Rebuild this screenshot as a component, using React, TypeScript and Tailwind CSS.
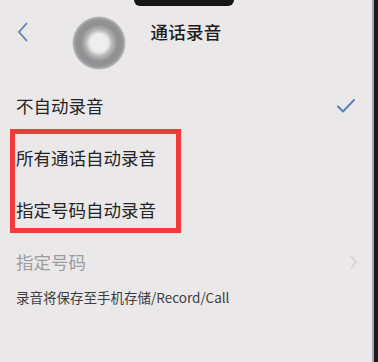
import React from 'react';

const CJK = { fontFamily: '"Noto Sans CJK SC", "Noto Sans", sans-serif' };

const BackIcon = () => (
  <svg width="12" height="20" viewBox="0 0 12 20" fill="none">
    <path d="M9.5 1.5 L2 10 L9.5 18.5" stroke="#5b7fb6" strokeWidth="1.8" strokeLinecap="round" strokeLinejoin="round" />
  </svg>
);

const CheckIcon = () => (
  <svg width="20" height="16" viewBox="0 0 20 16" fill="none">
    <path d="M2 8.5 L7 13.5 L18 2" stroke="#5a7fb8" strokeWidth="2" strokeLinecap="round" strokeLinejoin="round" />
  </svg>
);

const ChevronRight = () => (
  <svg width="8" height="14" viewBox="0 0 8 14" fill="none">
    <path d="M1.5 1.5 L6 7 L1.5 12.5" stroke="#d2d2d4" strokeWidth="1.6" strokeLinecap="round" strokeLinejoin="round" />
  </svg>
);

// touch indicator from the screen recording
const TouchDot = () => (
  <svg width="54" height="54" viewBox="0 0 54 54">
    <defs>
      <radialGradient id="td" cx="50%" cy="50%" r="50%">
        <stop offset="0%" stopColor="#f1efef" />
        <stop offset="34%" stopColor="#eeecec" />
        <stop offset="50%" stopColor="#b8b7b8" />
        <stop offset="70%" stopColor="#908f91" />
        <stop offset="88%" stopColor="#939294" />
        <stop offset="100%" stopColor="#bdbcbe" />
      </radialGradient>
    </defs>
    <circle cx="27" cy="27" r="26.5" fill="url(#td)" />
  </svg>
);

const Row: React.FC<{ label: string; muted?: boolean; right?: React.ReactNode }> = ({ label, muted, right }) => (
  <div className="h-[52px] flex items-center justify-between pl-[16px] pr-[22px]">
    <span className={`text-[17.5px] ${muted ? 'text-[#9d9c9e]' : 'text-[#262526]'}`}>{label}</span>
    {right}
  </div>
);

export default function App() {
  return (
    <div className="relative w-[378px] h-[362px] overflow-hidden bg-[#ebe8ea]" style={CJK}>
      {/* notch */}
      <div className="absolute top-0 left-[134px] w-[100px] h-[6px] rounded-b-[10px] bg-[#161616]" />

      {/* Header */}
      <div className="h-[64px] flex items-center pl-[17px] pr-[23px]">
        <div className="flex-1 flex">
          <BackIcon />
        </div>
        <h1 className="text-[17.5px] font-medium text-[#1e1d1e] tracking-[0.2px]">通话录音</h1>
        <div className="flex-1" />
      </div>

      <div className="mt-[16px] flex flex-col">
        <Row label="不自动录音" right={<CheckIcon />} />
        <Row label="所有通话自动录音" />
        <Row label="指定号码自动录音" />
        <Row label="指定号码" muted right={<div className="mr-[-2px]"><ChevronRight /></div>} />
        <div className="h-[18px] flex items-center pl-[16px]">
          <span className="text-[13.5px] text-[#3e3d3f]">录音将保存至手机存储/Record/Call</span>
        </div>
      </div>

      {/* touch indicator */}
      <div className="absolute left-[72px] top-[16px]">
        <TouchDot />
      </div>

      {/* red annotation box */}
      <div className="absolute left-[10px] top-[129px] w-[171px] h-[104px] border-[5px] border-[#f23a3c]" />

      {/* phone edge */}
      <div className="absolute top-0 right-0 h-full w-[6px] flex">
        <div className="w-[2px] bg-[#a9a8b0]" />
        <div className="flex-1 bg-[#1b1b1d]" />
      </div>
    </div>
  );
}
